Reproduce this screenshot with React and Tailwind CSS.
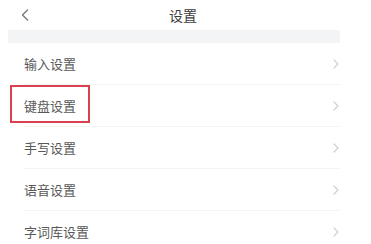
import React from 'react';

const rows = ['输入设置', '键盘设置', '手写设置', '语音设置', '字词库设置'];

function Chevron() {
  return (
    <svg width="6" height="10" viewBox="0 0 6 10" fill="none" className="shrink-0">
      <path d="M1 1l4 4-4 4" stroke="#d0d0d0" strokeWidth="1.2" strokeLinecap="round" strokeLinejoin="round" />
    </svg>
  );
}

export default function App() {
  return (
    <div
      className="w-[371px] h-[244px] overflow-hidden bg-white text-[#595959]"
      style={{ fontFamily: '"Noto Sans CJK SC", "Noto Sans", sans-serif' }}
    >
      <div className="w-[340px]">
        {/* header */}
        <div className="flex h-[30px] items-center">
          <svg width="8" height="12" viewBox="0 0 8 12" fill="none" className="ml-[21px]">
            <path d="M6.5 1L1.5 6l5 5" stroke="#777" strokeWidth="1.4" strokeLinecap="round" strokeLinejoin="round" />
          </svg>
          <span className="ml-[140px] text-[14px] leading-none text-[#3c3c3c]">设置</span>
        </div>

        <div className="ml-2 h-[13px] bg-[#f3f4f6]" />

        <div className="ml-[23px]">
          {rows.map((label, i) => (
            <div
              key={label}
              className="relative flex h-[42px] items-center justify-between border-b border-[#f4f4f4] pr-[1px]"
            >
              <span className="ml-px text-[13px] leading-none">{label}</span>
              <Chevron />
              {i === 1 && (
                <div className="pointer-events-none absolute left-[-13px] top-0 h-[38px] w-[80px] border-2 border-[#d8414d]" />
              )}
            </div>
          ))}
        </div>
      </div>
    </div>
  );
}
